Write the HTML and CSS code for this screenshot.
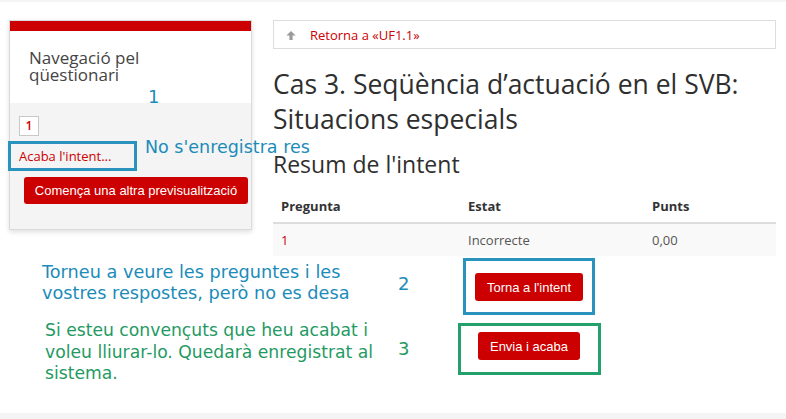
FILE: index.html
```html
<!DOCTYPE html>
<html lang="ca">
<head>
<meta charset="utf-8">
<title>Resum de l'intent</title>
<link rel="stylesheet" href="styles.css">
</head>
<body>
<div class="top-strip"></div>
<div class="page">
  <aside class="sidebar">
    <section class="card">
      <div class="card-bar"></div>
      <h3 class="card-title">Navegació pel qüestionari</h3>
      <div class="card-body">
        <div class="qnav"><a class="qbox">1</a></div>
        <a class="finish-link">Acaba l'intent...</a>
        <button class="btn btn-wide">Comença una altra previsualització</button>
      </div>
    </section>
  </aside>
  <main class="main">
    <nav class="crumb">
      <svg class="crumb-icon" width="10" height="9" viewBox="0 0 10 9"><path d="M5 0 L9.6 4.6 H6.6 V9 H3.4 V4.6 H0.4 Z" fill="#9a9a9a"/></svg>
      <a class="crumb-link">Retorna a «UF1.1»</a>
    </nav>
    <h2 class="title">Cas 3. Seqüència d’actuació en el SVB: Situacions especials</h2>
    <h3 class="subtitle">Resum de l'intent</h3>
    <table class="summary">
      <colgroup><col class="col-q"><col class="col-s"><col></colgroup>
      <thead>
        <tr><th>Pregunta</th><th>Estat</th><th>Punts</th></tr>
      </thead>
      <tbody>
        <tr><td class="qnum">1</td><td>Incorrecte</td><td>0,00</td></tr>
      </tbody>
    </table>
    <div class="actions">
      <div class="frame frame-blue"><button class="btn btn-return">Torna a l'intent</button></div>
      <div class="frame frame-green"><button class="btn btn-submit">Envia i acaba</button></div>
    </div>
  </main>

  <div class="note note-blue num num-1">1</div>
  <div class="mark-box"></div>
  <div class="note note-blue note-noreg">No s'enregistra res</div>
  <div class="note note-blue note-return">Torneu a veure les preguntes i les<br>vostres respostes, però no es desa</div>
  <div class="note note-blue num num-2">2</div>
  <div class="note note-green note-submit">Si esteu convençuts que heu acabat i<br>voleu lliurar-lo. Quedarà enregistrat al<br>sistema.</div>
  <div class="note note-green num num-3">3</div>
</div>
<div class="bottom-strip"></div>
</body>
</html>
```

FILE: styles.css
```css
html, body {
  margin: 0;
  padding: 0;
}

body {
  height: 419px;
  display: flex;
  flex-direction: column;
  overflow: hidden;
  background: #fff;
  color: #333;
  font-family: "Open Sans", sans-serif;
}

.top-strip {
  height: 2px;
  background: #f4f4f4;
  flex: none;
}

.bottom-strip {
  height: 6px;
  background: #f4f4f4;
  flex: none;
}

.page {
  position: relative;
  flex: 1;
  display: flex;
  align-items: flex-start;
  padding: 18px 0 0 9px;
}

/* Sidebar card */
.sidebar {
  width: 243px;
  flex: none;
}

.card {
  border: 1px solid #dadada;
  background: #fff;
  box-shadow: 0 2px 5px rgba(0, 0, 0, 0.13);
}

.card-bar {
  height: 10px;
  background: #c00;
}

.card-title {
  margin: 0;
  padding: 18px 60px 20px 19px;
  font-size: 17px;
  line-height: 17px;
  font-weight: 400;
  color: #444;
}

.card-body {
  background: #f4f4f4;
  padding: 13px 4px 25px 9px;
}

.qnav {
  display: flex;
}

.qbox {
  width: 18px;
  height: 18px;
  border: 1px solid #c8c8c8;
  background: #fff;
  color: #c00;
  font-size: 12px;
  font-weight: 600;
  line-height: 18px;
  text-align: center;
}

.finish-link {
  display: block;
  margin-top: 10px;
  font-size: 13px;
  line-height: 20px;
  color: #c00;
}

.btn {
  background: #c00;
  color: #fff;
  border: 0;
  border-radius: 3px;
  font-family: "Liberation Sans", Arial, sans-serif;
  font-size: 13px;
  height: 28px;
  padding: 0 12px;
}

.btn-wide {
  display: block;
  margin: 11px 0 0 5px;
  width: 224px;
  height: 27px;
  padding: 0;
}

/* Main column */
.main {
  width: 503px;
  margin-left: 21px;
  flex: none;
}

.crumb {
  height: 27px;
  border: 1px solid #ddd;
  display: flex;
  align-items: center;
  padding-left: 12px;
  font-size: 13px;
}

.crumb-icon {
  flex: none;
  margin-top: 1px;
}

.crumb-link {
  margin-left: 14px;
  color: #c00;
}

.title {
  margin: 18px 0 0;
  font-size: 26.5px;
  line-height: 35px;
  font-weight: 400;
  color: #2f2f2f;
}

.subtitle {
  margin: 13px 0 0;
  font-size: 23px;
  line-height: 28px;
  font-weight: 400;
  color: #2f2f2f;
}

.summary {
  margin-top: 12px;
  width: 100%;
  border-collapse: collapse;
  table-layout: fixed;
  font-size: 13px;
  line-height: 20px;
}

.col-q { width: 187px; }
.col-s { width: 184px; }

.summary th {
  text-align: left;
  font-weight: 700;
  color: #333;
  padding: 6px 8px;
  border-bottom: 2px solid #ddd;
}

.summary td {
  padding: 6px 8px;
  background: #f9f9f9;
  color: #555;
}

.summary td.qnum {
  color: #c00;
}

.actions {
  margin-top: 2px;
  padding-left: 9px;
  display: flex;
  flex-direction: column;
  align-items: center;
  gap: 8px;
}

.frame {
  display: flex;
  justify-content: center;
  align-items: flex-start;
}

.frame-blue {
  width: 126px;
  padding: 12px 0 11px;
  border: 3px solid #2a93bd;
}

.frame-green {
  width: 137px;
  padding: 6px 0 12px;
  border: 3px solid #23a06b;
}

/* Annotations laid over the screenshot */
.note {
  position: absolute;
  font-family: "DejaVu Sans", sans-serif;
  font-size: 17.2px;
  line-height: 21px;
  white-space: nowrap;
}

.note-blue { color: #1b8cb9; }
.note-green { color: #1f9a63; }

.num {
  font-size: 18px;
}

.num-1 { left: 148px; top: 84px; }
.num-2 { left: 398px; top: 271px; }
.num-3 { left: 398px; top: 336px; }

.note-noreg {
  left: 145px;
  top: 135px;
  font-size: 17.5px;
}

.note-return {
  left: 42px;
  top: 260px;
  height: 41px;
  font-size: 17.7px;
  overflow: hidden;
}

.note-submit {
  left: 45px;
  top: 318px;
  line-height: 21.5px;
}

.mark-box {
  position: absolute;
  left: 8px;
  top: 139px;
  width: 129px;
  height: 30px;
  box-sizing: border-box;
  border: 3px solid #2a93bd;
}
```
